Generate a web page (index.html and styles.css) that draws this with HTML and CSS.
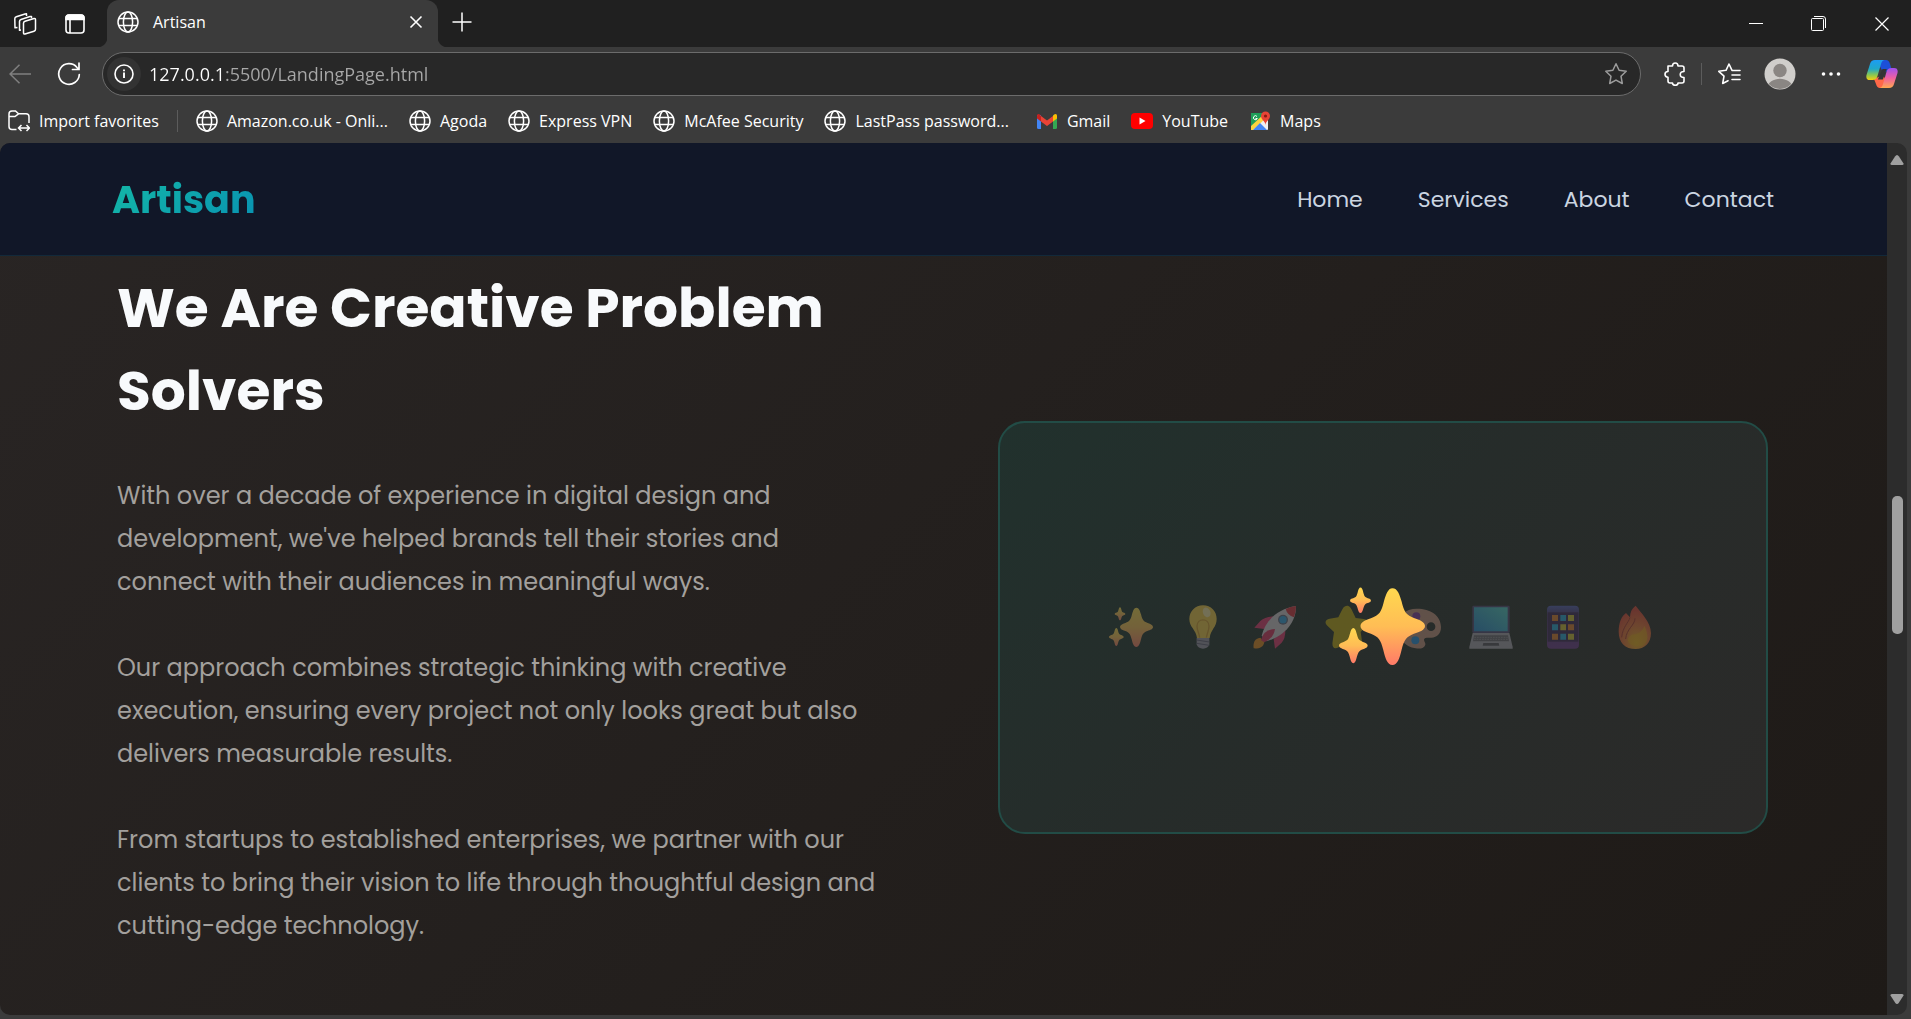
FILE: index.html
```html
<!DOCTYPE html>
<html lang="en">
<head>
<meta charset="utf-8">
<title>Artisan</title>
<link rel="stylesheet" href="styles.css">
</head>
<body>
<svg class="defs" aria-hidden="true">
  <defs>
    <linearGradient id="gold" x1="0" y1="0" x2="0" y2="1"><stop offset="0" stop-color="#ffd84f"/><stop offset=".5" stop-color="#ffbd55"/><stop offset="1" stop-color="#ff7a68"/></linearGradient>
    <linearGradient id="screen" x1="0" y1="1" x2="1" y2="0"><stop offset="0" stop-color="#2a8ad0"/><stop offset="1" stop-color="#54d0c8"/></linearGradient>
    <linearGradient id="case" x1="0" y1="0" x2="0" y2="1"><stop offset="0" stop-color="#5561b8"/><stop offset=".2" stop-color="#513f7a"/><stop offset="1" stop-color="#6c3a8c"/></linearGradient>
    <radialGradient id="flame" cx=".55" cy=".85" r=".75"><stop offset="0" stop-color="#f0b428"/><stop offset=".5" stop-color="#e87838"/><stop offset="1" stop-color="#dc4838"/></radialGradient>
    <linearGradient id="cpa" x1="0" y1="0" x2="0" y2="1"><stop offset="0" stop-color="#1c9cf4"/><stop offset=".45" stop-color="#20a8c8"/><stop offset=".75" stop-color="#8cc850"/><stop offset="1" stop-color="#f4d010"/></linearGradient>
    <linearGradient id="cpb" x1="0" y1="0" x2="0" y2="1"><stop offset="0" stop-color="#a050f0"/><stop offset=".5" stop-color="#f060a0"/><stop offset="1" stop-color="#ffa850"/></linearGradient>
    <symbol id="globe" viewBox="0 0 22 22"><g fill="none" stroke="currentColor" stroke-width="1.5"><circle cx="11" cy="11" r="10"/><ellipse cx="11" cy="11" rx="4.6" ry="10"/><path d="M2 7.5h18M2 14.5h18"/></g></symbol>
    <symbol id="sparkles" viewBox="0 0 132 132"><g fill="url(#gold)"><path d="M82 8c8 0 11 10 14 20 4 17 7 21 20 26 9 3 16 6 16 12s-8 9-17 12c-12 5-15 9-19 25-3 12-6 23-14 23s-11-11-14-23c-4-16-7-20-19-25-9-3-16-6-16-12s7-9 16-12c13-5 16-9 20-26 3-10 6-20 13-20z"/><path d="M33 7c4 0 4 11 7 14s9 2 9 6-6 3-9 6-3 13-7 13-4-10-7-13-9-2-9-6 6-3 9-6 3-14 7-14z"/><path d="M22 69c5 0 5 14 9 18s13 4 13 9-9 5-13 9-4 18-9 18-5-14-9-18-13-4-13-9 9-5 13-9 4-18 9-18z"/></g></symbol>
  </defs>
</svg>

<div class="browser">
  <div class="tabstrip">
    <button class="strip-btn" aria-label="Workspaces"><svg width="24" height="24" viewBox="0 0 24 24" fill="none" stroke="currentColor" stroke-width="1.5" stroke-linejoin="round"><path d="M10.500 11.200q0-1.500 1.500-2l9-2.700q1.500-.3 1.500 1.200v9.500q0 1.500-1.500 2l-9 2.800q-1.500.3-1.500-1.200z"/><path d="M8 18l-1.500.3V9.500q0-1.500 1.500-2l9-3 1.500-.1v1.800M4.500 15.500l-2.500.3-.2-9q0-1.500 1.500-2L12 2l1.500-.2V4"/></svg></button>
    <button class="strip-btn" aria-label="Tab actions"><svg width="22" height="22" viewBox="0 0 22 22" fill="none" stroke="currentColor" stroke-width="1.600"><rect x="2" y="2" width="18" height="18" rx="3"/><path d="M2 6.500V5q0-3 3-3h12q3 0 3 3v1.500z" fill="currentColor"/><path d="M6 7v13"/></svg></button>
    <div class="tab">
      <svg class="ico" aria-hidden="true"><use href="#globe"/></svg>
      <span class="tab-title">Artisan</span>
      <button class="tab-close" aria-label="Close tab"><svg width="14" height="14" viewBox="0 0 14 14" stroke="currentColor" stroke-width="1.600"><path d="M1.500 1.500l11 11M12.500 1.500l-11 11"/></svg></button>
    </div>
    <button class="new-tab" aria-label="New tab"><svg width="20" height="20" viewBox="0 0 20 20" stroke="currentColor" stroke-width="1.500"><path d="M10 .5v19M.5 10h19"/></svg></button>
    <div class="window-controls">
      <button aria-label="Minimize"><svg width="14" height="14" viewBox="0 0 14 14" stroke="currentColor"><path d="M0 6.500h14"/></svg></button>
      <button aria-label="Restore"><svg width="15" height="15" viewBox="0 0 15 15" fill="none" stroke="currentColor"><rect x=".5" y="2.500" width="12" height="12" rx="1"/><path d="M3 .5h9q2.500 0 2.500 2.500v9"/></svg></button>
      <button aria-label="Close"><svg width="14" height="14" viewBox="0 0 14 14" stroke="currentColor" stroke-width="1.200"><path d="M.5.5l13 13M13.500.5l-13 13"/></svg></button>
    </div>
  </div>

  <div class="toolbar">
    <button class="nav-btn back" aria-label="Back"><svg width="22" height="20" viewBox="0 0 22 20" fill="none" stroke="currentColor" stroke-width="1.500"><path d="M22 10H1M10.500.7L1 10l9.500 9.300"/></svg></button>
    <button class="nav-btn" aria-label="Refresh"><svg width="24" height="24" viewBox="0 0 24 24" fill="none" stroke="currentColor" stroke-width="1.700" stroke-linecap="round"><path d="M22.300 12.500A10.300 10.300 0 1 1 20 5.500l1.500 1.700M22 1v6.500h-6.500"/></svg></button>
    <div class="address">
      <button class="site-info" aria-label="Site information"><svg width="20" height="20" viewBox="0 0 20 20" fill="none" stroke="currentColor" stroke-width="1.600"><circle cx="10" cy="10" r="9"/><path d="M10 8.500V14M10 5.500v1.800" stroke-width="1.900"/></svg></button>
      <input class="url" type="text" aria-label="Address" value="127.0.0.1:5500/LandingPage.html">
      <button class="fav" aria-label="Add to favorites"><svg width="24" height="24" viewBox="0 0 24 24" fill="none" stroke="currentColor" stroke-width="1.500" stroke-linejoin="round"><path d="M12 1.800l3.100 6.500 7.100 1-5.200 4.900 1.300 7.300-6.300-3.400-6.300 3.400L7 14.200 1.800 9.300l7.100-1z"/></svg></button>
    </div>
    <div class="tools">
      <button aria-label="Extensions"><svg width="22" height="24" viewBox="0 0 22 24" fill="none" stroke="currentColor" stroke-width="1.600" stroke-linejoin="round"><path d="M4 4h4.500C8.500 0 14 0 14 4h4q2 0 2 2v3.500c-5 0-5 6 0 6V19q0 2-2 2h-4c0 3-5.500 3-5.500 0H6q-2 0-2-2v-3.800C0 15.200 0 9.500 4 9.500z"/></svg></button>
      <span class="rule"></span>
      <button aria-label="Favorites"><svg width="24" height="24" viewBox="0 0 24 24" fill="none" stroke="currentColor" stroke-width="1.600" stroke-linejoin="round" stroke-linecap="round"><path d="M15 8.300L12 2 9 8.300l-7.200 1L7 14.200l-1.300 7.300 5.300-2.800M15 8.500h8M15 13h8M15 17.500h8"/></svg></button>
      <button aria-label="Profile"><svg width="32" height="32" viewBox="0 0 32 32"><clipPath id="face"><circle cx="16" cy="16" r="15"/></clipPath><circle cx="16" cy="16" r="15.500" fill="#d0cecb"/><g fill="#8a8683" clip-path="url(#face)"><circle cx="16" cy="12.500" r="6.700"/><path d="M2 32c2-15 26-15 28 0z"/></g></svg></button>
      <button class="more" aria-label="Settings and more"><svg width="20" height="6" viewBox="0 0 20 6" fill="currentColor"><circle cx="2.500" cy="3" r="1.800"/><circle cx="10" cy="3" r="1.800"/><circle cx="17.500" cy="3" r="1.800"/></svg></button>
      <button aria-label="Copilot"><svg width="32" height="30" viewBox="0 0 32 30"><path d="M14 29q-3 0-4-4l-2-5 9-4 5 9-2 4z" fill="#ff6848"/><path d="M8 1h12q3 0 4 4l1.500 5-8 4-5-9z" fill="#1c50d8"/><path d="M9 1h10q-3 0-4 4l-3.500 12q-1 4-5 4H4q-4.500 0-3.500-5L4 5q1-4 5-4z" fill="url(#cpa)"/><path d="M23 29H13q3 0 4-4l3.500-12q1-4 5-4H28q4.500 0 3.500 5L28 25q-1 4-5 4z" fill="url(#cpb)"/><path d="M16.500 10h4.300l-4 10.500h-5z" fill="#343434"/></svg></button>
    </div>
  </div>

  <nav class="bookmarks" aria-label="Favorites bar">
    <a class="import" href="#"><svg class="ico" viewBox="0 0 22 22" fill="none" stroke="currentColor" stroke-width="1.500"><path d="M8.500 19.500H4q-3 0-3-3V4q0-3 3-3h3.500l3 2.800H18q3 0 3 3V13M1 6.500h6l3.500-2.700M11 18h10M13.500 15l-3 3 3 3M18.500 15l3 3-3 3"/></svg><span>Import favorites</span></a>
    <span class="rule"></span>
    <a href="#"><svg class="ico"><use href="#globe"/></svg><span>Amazon.co.uk - Onli...</span></a>
    <a href="#"><svg class="ico"><use href="#globe"/></svg><span>Agoda</span></a>
    <a href="#"><svg class="ico"><use href="#globe"/></svg><span>Express VPN</span></a>
    <a href="#"><svg class="ico"><use href="#globe"/></svg><span>McAfee Security</span></a>
    <a class="wide" href="#"><svg class="ico"><use href="#globe"/></svg><span>LastPass password...</span></a>
    <a href="#"><svg class="ico" viewBox="0 0 22 22"><path d="M1 5h4v14H2.500Q1 19 1 17.500z" fill="#4285f4"/><path d="M17 5h4v12.500q0 1.500-1.500 1.500H17z" fill="#34a853"/><path d="M17 6l1-1.500q3-1.500 3 1.500v2.500L17 11.500z" fill="#fbbc04"/><path d="M5 6l6 4.500L17 6v5.500L11 16l-6-4.500z" fill="#ea4335"/><path d="M1 8.500V6q0-3 3-1.500L5 6v5.500z" fill="#c5221f"/></svg><span>Gmail</span></a>
    <a href="#"><svg class="ico" viewBox="0 0 22 22"><rect y="3" width="22" height="16" rx="4" fill="#f00"/><path d="M8.500 7.500l6 3.500-6 3.500z" fill="#fff"/></svg><span>YouTube</span></a>
    <a href="#"><svg class="ico" viewBox="0 0 22 22"><rect x="2" y="3" width="17" height="17" rx="1" fill="#f0f0f0"/><path d="M2 3h13v4L3 20H2z" fill="#1e9e58"/><path d="M2 16L14 5l2 4L4 20H2z" fill="#fcd440"/><path d="M4 20l7-7 7 7z" fill="#4285f4"/><path d="M16.500 15c0-4-4.500-5-4.500-9a4.500 4.500 0 0 1 9 0c0 4-4.500 5-4.500 9z" fill="#e84436"/><circle cx="16.500" cy="6" r="1.600" fill="#8c1a12"/><path d="M8 6.500a2 2 0 1 0 .3 2H6.500" fill="none" stroke="#fff"/></svg><span>Maps</span></a>
  </nav>

  <div class="viewport">
    <div class="page">
      <header class="site-header">
        <a class="logo" href="#">Artisan</a>
        <nav class="site-nav">
          <a href="#">Home</a>
          <a href="#">Services</a>
          <a href="#">About</a>
          <a href="#">Contact</a>
        </nav>
      </header>
      <main class="about">
        <section class="copy">
          <h2>We Are Creative Problem Solvers</h2>
          <p>With over a decade of experience in digital design and development, we've helped brands tell their stories and connect with their audiences in meaningful ways.</p>
          <p>Our approach combines strategic thinking with creative execution, ensuring every project not only looks great but also delivers measurable results.</p>
          <p>From startups to established enterprises, we partner with our clients to bring their vision to life through thoughtful design and cutting-edge technology.</p>
        </section>
        <div class="visual">
          <div class="emoji-row">
            <svg><use href="#sparkles"/></svg>
            <svg viewBox="0 0 132 132"><path d="M66 1c24 0 41 18 41 41 0 25-18 31-21 57H48C45 73 25 67 25 42 25 19 43 1 66 1z" fill="#f8c848"/><path d="M56 98c-2-16-8-22-8-34 0-26 36-26 36 0 0 12-5 18-8 34" fill="none" stroke="#d89a30" stroke-width="4"/><ellipse cx="77" cy="22" rx="11" ry="15" transform="rotate(-25 77 22)" fill="#fff" opacity=".5"/><path d="M47 99h38v19q-4 13-19 13t-19-13z" fill="#a094a8"/><path d="M47 105l38 6M47 115l38 6" stroke="#685e78" stroke-width="3"/></svg>
            <svg viewBox="0 0 132 132"><path d="M22 98c-18 2-22 16-20 32 16 1 30-3 32-20z" fill="#e88820"/><path d="M34 72L4 68l18-20q14-12 40-14zM62 102l4 29 20-18q12-14 11-40z" fill="#e83870"/><path d="M26 92C36 50 70 12 129 3c1 50-36 90-88 106z" fill="#d8ccd4"/><path d="M98 12Q112 5 129 3q1 16-6 34-20-6-25-25z" fill="#dc3040"/><circle cx="90" cy="44" r="15" fill="#686880"/><circle cx="90" cy="44" r="11" fill="#38a0e0"/><path d="M24 106q8-34 42-34-4 28-32 40z" fill="#dc3060"/></svg>
            <svg class="dim" viewBox="0 0 132 132"><path d="M66 2c8 0 13 8 17 18l9 19 24 3c16 3 18 12 8 21L107 81l4 28c3 18-6 26-20 18l-25-12-25 12c-14 8-21 0-18-18l4-28L7 62C-3 52 2 43 14 41l26-4 9-18C53 9 58 2 66 2z" fill="#e0c010"/></svg>
            <svg viewBox="0 0 132 132"><path fill-rule="evenodd" d="M60 11c40 0 72 20 72 56 0 18-12 31-29 31-12 0-22-1-22 6 0 6 5 8 4 15-3 11-15 13-29 11C24 125 0 100 0 66 0 33 24 11 60 11zM102 52a13 13 0 1 0 .1 26 13 13 0 0 0 0-26z" fill="#c89480"/><circle cx="58" cy="34" r="12" fill="#8038a0"/><circle cx="55" cy="106" r="12" fill="#2890e0"/><circle cx="24" cy="60" r="12" fill="#48a850"/></svg>
            <svg viewBox="0 0 132 132"><rect x="10" y="2" width="112" height="82" rx="4" fill="#544a78"/><path d="M15 7h101v72H15z" fill="url(#screen)"/><path d="M11 84h110l10 42v5H1v-5z" fill="#a8a4b0"/><path d="M15 91h102l3 18H12z" fill="#6c6874"/><path d="M16 97h100M15 103h102" stroke="#a6a2ac" stroke-width="2" stroke-dasharray="5 3"/><path d="M43 114h46l2 8H41z" fill="#56525e"/></svg>
            <svg viewBox="0 0 132 132"><rect x="18" y="2" width="96" height="129" rx="12" fill="url(#case)"/><path d="M20 22h92v88H20z" fill="#3e2858"/><g fill="#e08030"><path d="M33 30h18v18H33zM81 58h18v18H81zM33 86h18v18H33z"/></g><g fill="#28a8d8"><path d="M58 30h17v18H58zM33 58h18v18H33zM58 86h17v18H58z"/></g><g fill="#d0c038"><path d="M81 30h18v18H81zM58 58h17v18H58zM81 86h18v18H81z"/></g></svg>
            <svg viewBox="0 0 132 132"><path d="M68 2c14 20 46 48 46 82 0 30-19 48-46 48-32 0-51-20-51-52 0-26 8-46 22-56l12 13C51 21 57 10 68 2z" fill="url(#flame)"/><path d="M51 37c-4 16-22 28-25 60M66 40c0 20-26 32-28 62" fill="none" stroke="#a83830" stroke-width="3"/><path d="M94 62c20 40 5 64-20 62-38-3-36-32-10-36 16-3 26-12 30-26z" fill="#ecb018" opacity=".6"/></svg>
          </div>
          <svg class="spark"><use href="#sparkles"/></svg>
        </div>
      </main>
    </div>
    <div class="scrollbar" aria-hidden="true">
      <svg width="14" height="12" viewBox="0 0 14 12"><path d="M7 1q1 0 2 1.500l4.500 7Q14 11 12 11H2Q0 11 .5 9.500L5 2.500Q6 1 7 1z" fill="#a0a0a0"/></svg>
      <div class="track"><span class="thumb"></span></div>
      <svg width="14" height="12" viewBox="0 0 14 12"><path d="M7 11q1 0 2-1.500l4.500-7Q14 1 12 1H2Q0 1 .5 2.500L5 9.500Q6 11 7 11z" fill="#a0a0a0"/></svg>
    </div>
  </div>
</div>
</body>
</html>
```
FILE: styles.css
```css
* { box-sizing: border-box; }
body { margin: 0; background: #3b3b3b; color: #fff; font-family: "Segoe UI", "Open Sans", "Noto Sans", sans-serif; font-size: 16px; }
button { display: flex; align-items: center; justify-content: center; margin: 0; padding: 0; border: 0; background: none; color: inherit; font: inherit; }
a { color: inherit; text-decoration: none; }
svg { display: block; flex: none; }
.defs { position: absolute; width: 0; height: 0; }
.ico { width: 22px; height: 22px; }
.browser { display: flex; flex-direction: column; min-height: 100vh; padding-bottom: 4px; }

.tabstrip { display: flex; align-items: center; height: 47px; background: #202020; }
.strip-btn { width: 50px; height: 44px; }
.tab { position: relative; display: flex; align-items: center; width: 331px; height: 47px; margin-left: 7px; padding: 0 15px 3px 10px; border-radius: 12px 12px 0 0; background: #3b3b3b; }
.tab::before, .tab::after { content: ""; position: absolute; bottom: 0; width: 10px; height: 10px; }
.tab::before { right: 100%; background: radial-gradient(circle at 0 0, #202020 10px, #3b3b3b 11px); }
.tab::after { left: 100%; background: radial-gradient(circle at 100% 0, #202020 10px, #3b3b3b 11px); }
.tab-title { flex: 1; margin-left: 14px; }
.new-tab { margin-left: 14px; padding-bottom: 3px; }
.window-controls { display: flex; gap: 4px; margin-left: auto; }
.window-controls button { width: 59px; height: 44px; }

.toolbar { display: flex; align-items: center; height: 54px; padding: 0 13px 0 8px; }
.nav-btn { width: 24px; height: 44px; }
.nav-btn + .nav-btn { margin-left: 25px; }
.back { color: #808080; }
.address { display: flex; flex: 1; align-items: center; height: 44px; margin-left: 21px; padding: 0 12px 0 4px; border: 1px solid #6c6c6c; border-radius: 22px; background: #282828; }
.site-info { width: 34px; height: 34px; border-radius: 50%; background: #333; }
.url { flex: 1; min-width: 0; height: 40px; margin-left: 8px; padding: 0; border: 0; outline: 0; background: linear-gradient(90deg, #fff 75px, #a8a8a8 75px); background-clip: text; -webkit-background-clip: text; color: transparent; font: inherit; font-size: 18px; }
.fav { color: #9c9c9c; }
.tools { display: flex; align-items: center; margin-left: 23px; }
.rule { width: 1px; height: 22px; background: #5c5c5c; }
.tools .rule { margin: 0 15px; }
.tools button + button { margin-left: 23px; }
.more { width: 24px; }

.bookmarks { display: flex; align-items: center; gap: 21px; height: 42px; padding: 0 8px 2px; white-space: nowrap; }
.bookmarks a { display: flex; align-items: center; gap: 9px; }
.bookmarks .rule { margin: 0 -3px; }
.bookmarks .wide { margin-right: 6px; }

.viewport { display: flex; flex: 1; margin-right: 4px; overflow: hidden; border-radius: 10px; }
.page { flex: 1; display: flex; flex-direction: column; min-width: 0; font-family: Poppins, Inter, "Open Sans", sans-serif; background: linear-gradient(135deg, #292524, #1e1a17); }
.site-header { display: flex; align-items: center; justify-content: space-between; height: 113px; padding: 0 113px 0 112px; border-bottom: 1px solid #12293a; background: #111728; }
.logo { background: linear-gradient(135deg, #14b8a6, #0891b2); background-clip: text; -webkit-background-clip: text; color: transparent; font-size: 38px; font-weight: 700; }
.site-nav { display: flex; gap: 55px; color: #cbd5e1; font-size: 22px; }
.about { display: grid; grid-template-columns: minmax(0, 1fr) minmax(0, 1fr); gap: 110px; align-items: center; padding: 10px 119px 27px 117px; }
.copy { padding-right: 8px; }
.copy h2 { margin: 0 0 42px; color: #f8fafc; font-size: 55px; font-weight: 700; line-height: 83px; }
.copy p { margin: 0 0 43px; color: #a3a09d; font-size: 24px; line-height: 43px; }
.copy p:last-child { margin-bottom: 41px; }
.visual { position: relative; display: flex; align-items: center; justify-content: center; height: 413px; border: 2px solid #224c46; border-radius: 27px; background: linear-gradient(135deg, #21312d, #262c2a 45%, #2b2a29); }
.emoji-row { display: flex; gap: 28px; opacity: .36; }
.emoji-row svg { width: 44px; height: 44px; }
.emoji-row .dim { opacity: .85; }
.spark { position: absolute; top: calc(50% - 44px); left: calc(50% - 44px); width: 86px; height: 86px; }

.scrollbar { display: flex; flex-direction: column; align-items: center; width: 20px; padding: 11px 0 10px; background: #2c2c2c; }
.track { flex: 1; display: grid; grid-template-rows: 329fr 138fr 358fr; }
.thumb { grid-row: 2; width: 11px; border-radius: 5px; background: #a0a0a0; }
```
